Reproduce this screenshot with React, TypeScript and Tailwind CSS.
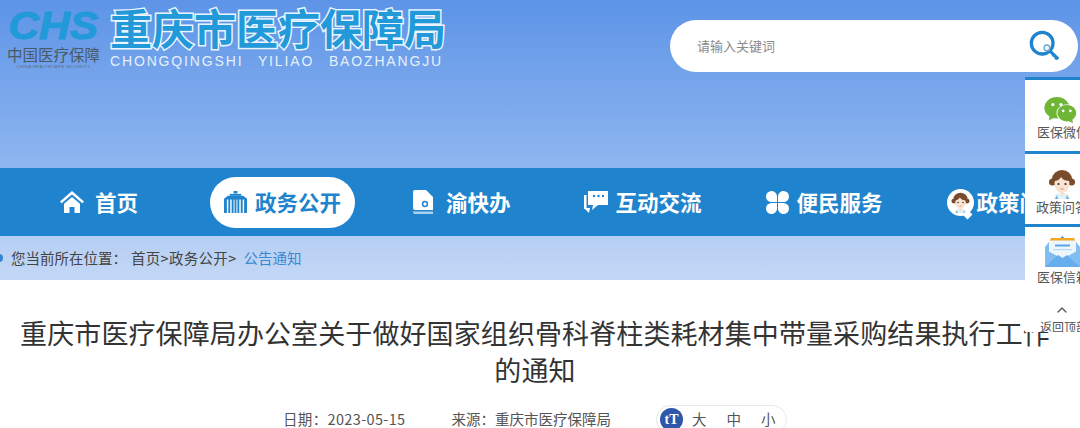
import { ChevronUp } from 'lucide-react';
import type { ReactNode } from 'react';

const cjk = "font-['Noto_Sans_CJK_SC','Noto_Sans',sans-serif]";

const Girl = ({ size = 30 }: { size?: number }) => (
  <svg width={size} height={size} viewBox="0 0 30 30">
    <path d="M7 30c0-4 3-6 8-6s8 2 8 6z" fill="#e3f1f6" />
    <path d="M13 23h4l-2 5z" fill="#f7dcc8" />
    <path d="M10 26l-2 4h3zM20 26l2 4h-3z" fill="#5bb4d8" />
    <ellipse cx="15" cy="10" rx="10" ry="9" fill="#7a4a2c" />
    <circle cx="5.500" cy="13" r="3.500" fill="#7a4a2c" />
    <circle cx="24.500" cy="13" r="3.500" fill="#7a4a2c" />
    <ellipse cx="15" cy="15" rx="7.500" ry="9" fill="#fbe3d3" />
    <path d="M7 12c3 0 5-1 7-4 2 3 5 4 9 4 0-6-4-8-8-8s-8 3-8 8z" fill="#7a4a2c" />
    <circle cx="11.500" cy="15" r="1.100" fill="#3a2a20" />
    <circle cx="18.500" cy="15" r="1.100" fill="#3a2a20" />
    <path d="M13.500 20h3" stroke="#d9846e" strokeWidth="1" />
  </svg>
);

const HomeIcon = () => (
  <svg width="24" height="22" viewBox="0 0 24 22" fill="#fff">
    <path d="M12 0L0 10.500l1.600 1.800L12 3.400l10.400 8.900 1.600-1.800z" />
    <path d="M12 6L4 12.800V22h5.500v-6h5v6H20v-9.200z" />
  </svg>
);

const BuildingIcon = () => (
  <svg width="23" height="22" viewBox="0 0 24 23" fill="#1f84cd">
    <path d="M10 0h4v2.600h-4z" />
    <path d="M0 23V8l4-3h16l4 3v15h-3V9h-1.500v14h-2V9H16v14h-2V9h-1v14h-2V9h-1v14H8V9H6.500v14h-2V9H3v14z" />
    <path d="M6 3h12v2H6z" />
  </svg>
);

const BookIcon = () => (
  <svg width="20" height="24" viewBox="0 0 20 24">
    <path d="M2 0h11l7 7v13H2a2 2 0 0 1-2-2V2a2 2 0 0 1 2-2z" fill="#fff" />
    <circle cx="12" cy="14" r="2.400" fill="none" stroke="#1f84cd" strokeWidth="1.500" />
    <path d="M0 21.500h20V24H2a2 2 0 0 1-2-2z" fill="#a9d3f0" />
  </svg>
);

const ChatIcon = () => (
  <svg width="24" height="22" viewBox="0 0 24 22">
    <path d="M4 0h20v14H14l-6 5 1-5H4z" fill="#fff" />
    <path d="M0 4h2.500v13H6l-1 5-4-4H0z" fill="#fff" />
    <circle cx="10" cy="5" r="1.200" fill="#1f84cd" />
    <circle cx="14.500" cy="5" r="1.200" fill="#1f84cd" />
    <circle cx="19" cy="5" r="1.200" fill="#1f84cd" />
  </svg>
);

const CloverIcon = () => (
  <svg width="23" height="23" viewBox="0 0 23 23" fill="#fff">
    <path d="M5.500 0C8.500 0 11 2.500 11 5.500V11H5.500a5.500 5.500 0 0 1 0-11z" />
    <path d="M17.500 0a5.500 5.500 0 0 1 0 11H12V5.500C12 2.500 14.500 0 17.500 0z" />
    <path d="M5.500 23a5.500 5.500 0 0 1 0-11H11v5.500C11 20.500 8.500 23 5.500 23z" />
    <path d="M17.500 23C14.500 23 12 20.500 12 17.500V12h5.500a5.500 5.500 0 0 1 0 11z" />
  </svg>
);

const WechatIcon = () => (
  <svg width="35" height="26" viewBox="0 0 36 29">
    <ellipse cx="14" cy="12" rx="14" ry="12" fill="#6fb536" />
    <path d="M6 20l-1 6 7-3z" fill="#6fb536" />
    <ellipse cx="25" cy="18" rx="11.500" ry="10" fill="#fff" />
    <ellipse cx="25" cy="18" rx="10.500" ry="9.200" fill="#6fb536" />
    <path d="M31 25l1 4-5-2z" fill="#6fb536" />
    <circle cx="9.500" cy="8.500" r="1.800" fill="#fff" />
    <circle cx="18.500" cy="8.500" r="1.800" fill="#fff" />
    <circle cx="21" cy="15.500" r="1.500" fill="#fff" />
    <circle cx="29" cy="15.500" r="1.500" fill="#fff" />
  </svg>
);

const MailIcon = () => (
  <svg width="35" height="32" viewBox="0 0 35 32">
    <path d="M6 3h23l3 6H3z" fill="#f5a623" />
    <path d="M15.500 3l2-2 2 2z" fill="#3f95e8" />
    <path d="M0 12l4-5h27l4 5v20H0z" fill="#7fbdf3" />
    <path d="M4 5.500h27v11L17.500 24 4 16.500z" fill="#eef6fd" />
    <path d="M10 9.500h15v2H10z" fill="#5aa5ea" />
    <path d="M8 14h19v1.200H8z" fill="#b9daf6" />
    <path d="M0 32l13-12 4.500 3 4.500-3 13 12z" fill="#66aeee" />
  </svg>
);

const KeySearchIcon = () => (
  <svg width="32" height="34" viewBox="0 0 34 34" fill="none">
    <circle cx="14" cy="14" r="11.500" stroke="#1f84cd" strokeWidth="3.500" />
    <path d="M20 20l11 11" stroke="#1f84cd" strokeWidth="3.500" />
    <path d="M27.500 31l2.500-2.500M25 28l2-2" stroke="#1f84cd" strokeWidth="2" />
    <circle cx="19" cy="19" r="3" fill="#fff" stroke="#6aa9d8" strokeWidth="1.500" />
  </svg>
);

const NavItem = ({ icon, label, className }: { icon: ReactNode; label: string; className: string }) => (
  <a className={`flex shrink-0 items-center whitespace-nowrap text-[21.500px] font-bold text-white ${className}`}>
    {icon}
    <span>{label}</span>
  </a>
);

const SideItem = ({ icon, label, iconClass, labelClass }: { icon: ReactNode; label: string; iconClass: string; labelClass: string }) => (
  <div className="h-[73.500px] w-[72px] border-t-[3px] border-[#1f84cd] pl-[12px]">
    <div className={`flex items-end ${iconClass}`}>{icon}</div>
    <div className={`whitespace-nowrap text-[13px] leading-[20px] text-[#555] ${labelClass}`}>{label}</div>
  </div>
);

export default function App() {
  return (
    <div className={`relative h-[428px] w-[1080px] overflow-hidden bg-white ${cjk}`}>
      <header className="flex h-[168px] items-start justify-between bg-gradient-to-b from-[#5d94e7] to-[#8fb6ef]">
        <div className="flex">
          <div className="ml-[5px] mt-[12px] flex w-[97px] flex-col items-center">
            <span className="origin-center scale-x-[1.12] font-['Liberation_Sans',sans-serif] text-[38px] font-bold italic leading-[28px] text-[#2299d8] [-webkit-text-stroke:1px_#2299d8]">
              CHS
            </span>
            <span className="mt-[4px] whitespace-nowrap text-[15.500px] leading-[20px] text-[#4a5a68]">中国医疗保障</span>
            <span className="whitespace-nowrap font-['Liberation_Sans',sans-serif] text-[4px] leading-[5px] tracking-[0.5px] text-[#5d6b78]">
              CHINA HEALTHCARE SECURITY
            </span>
          </div>
          <div className="ml-[8px] mt-[3px] flex flex-col">
            <h1 className="text-[42px] font-bold leading-[48px] text-[#2299d8] [-webkit-text-stroke:3px_#eaf4fe] [paint-order:stroke_fill]">
              重庆市医疗保障局
            </h1>
            <span className="mt-[1px] whitespace-nowrap font-['Liberation_Sans',sans-serif] text-[14px] leading-[18px] tracking-[1.85px] text-[#e6f0fc] [word-spacing:9px]">
              CHONGQINGSHI YILIAO BAOZHANGJU
            </span>
          </div>
        </div>
        <div className="mr-[2px] mt-[20px] flex h-[52px] w-[408px] items-center justify-between rounded-[26px] bg-white pl-[27px] pr-[17px]">
          <span className="text-[13px] text-[#8a8a8a]">请输入关键词</span>
          <KeySearchIcon />
        </div>
      </header>

      <nav className="flex h-[68px] items-center overflow-hidden bg-[#1f84cd] pl-[60px]">
        <NavItem icon={<HomeIcon />} label="首页" className="gap-[11px]" />
        <a className="ml-[72px] flex h-[51px] w-[145px] shrink-0 items-center justify-center gap-[8px] whitespace-nowrap rounded-[26px] bg-white text-[21.500px] font-bold text-[#1f84cd]">
          <BuildingIcon />
          <span>政务公开</span>
        </a>
        <NavItem icon={<BookIcon />} label="渝快办" className="ml-[58px] gap-[13px]" />
        <NavItem icon={<ChatIcon />} label="互动交流" className="ml-[73px] gap-[8px]" />
        <NavItem icon={<CloverIcon />} label="便民服务" className="ml-[64px] gap-[8px]" />
        <NavItem
          icon={
            <span className="relative flex h-[27px] w-[27px] items-center justify-center rounded-full bg-white">
              <Girl size={21} />
              <span className="absolute bottom-[-2px] right-[3px] h-[7px] w-[7px] rotate-45 bg-white" />
            </span>
          }
          label="政策问答"
          className="ml-[64px] gap-[3px]"
        />
      </nav>

      <div className="flex h-[44px] items-center whitespace-nowrap bg-gradient-to-b from-[#b5cef3] to-[#c4d8f6] text-[14.500px] text-[#444]">
        <span className="ml-[-5px] h-[8px] w-[8px] rounded-full bg-[#2f86cf]" />
        <span className="ml-[8px]">您当前所在位置：</span>
        <span className="ml-[4px] tracking-[0.3px]">首页&gt;政务公开&gt;</span>
        <span className="ml-[7px] text-[#3b87cf]">公告通知</span>
      </div>

      <main className="flex w-[1070px] flex-col items-center pt-[34px]">
        <h2 className="w-[1040px] text-center text-[27px] font-normal leading-[37px] tracking-[0.1px] text-[#333]">
          重庆市医疗保障局办公室关于做好国家组织骨科脊柱类耗材集中带量采购结果执行工作的通知
        </h2>
        <div className="mt-[16px] flex h-[30px] items-center self-start pl-[283px] text-[14.500px] text-[#555]">
          <span className="tracking-[0.35px]">日期：2023-05-15</span>
          <span className="ml-[46px]">来源：重庆市医疗保障局</span>
          <div className="ml-[45px] flex h-[29px] w-[131px] items-center rounded-[15px] border border-[#e8e8e8] pl-[3px]">
            <span className="flex h-[23px] w-[23px] items-center justify-center rounded-full bg-[#2d57a8] font-['Liberation_Serif',serif] text-[14px] font-bold text-white">
              tT
            </span>
            <span className="ml-[9px]">大</span>
            <span className="ml-[20px]">中</span>
            <span className="ml-[20px]">小</span>
          </div>
        </div>
      </main>

      <aside className="absolute right-0 top-[77px] h-[255px] w-[55px] overflow-hidden bg-white">
        <SideItem icon={<WechatIcon />} label="医保微信" iconClass="h-[43px] pl-[6px]" labelClass="mt-[-1px]" />
        <SideItem icon={<Girl size={30} />} label="政策问答" iconClass="h-[45px] pl-[10px]" labelClass="mt-[-2px] ml-[-1px]" />
        <SideItem icon={<MailIcon />} label="医保信箱" iconClass="h-[40px] pl-[8px]" labelClass="mt-[0px]" />
        <div className="flex w-[72px] flex-col items-start pt-[4px]">
          <ChevronUp size={16} strokeWidth={2} className="ml-[29px] text-[#555]" />
          <span className="ml-[15px] mt-[1px] whitespace-nowrap text-[12px] leading-[16px] text-[#555]">返回顶部</span>
        </div>
      </aside>
    </div>
  );
}
